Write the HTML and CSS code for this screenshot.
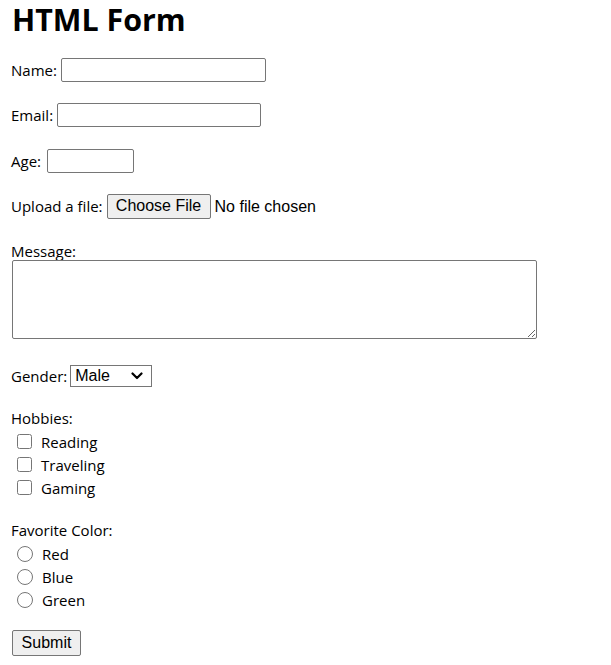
FILE: index.html
```html
<!DOCTYPE html>
<html lang="en">
<head>
<meta charset="utf-8">
<title>HTML Form</title>
<link rel="stylesheet" href="styles.css">
</head>
<body>
<h1 class="title">HTML Form</h1>
<form class="form">
  <div class="row gap-name"><label for="name">Name:</label><input class="text w-name" id="name" type="text"></div>
  <div class="row gap-email"><label for="email">Email:</label><input class="text w-email" id="email" type="email"></div>
  <div class="row gap-age"><label for="age">Age:</label><input class="text w-age" id="age" type="number"></div>
  <div class="row gap-upload"><label for="file">Upload a file:</label><input class="file" id="file" type="file"></div>
  <label class="caption gap-message" for="msg">Message:</label>
  <textarea class="msg" id="msg"></textarea>
  <div class="row gap-gender"><label for="gender">Gender:</label>
    <span class="select-wrap">
      <select class="select" id="gender"><option>Male</option><option>Female</option><option>Other</option></select>
      <svg class="chevron" width="12" height="8" viewBox="0 0 12 8" aria-hidden="true"><path d="M1.5 1.5 L6 6 L10.5 1.5" fill="none" stroke="#000" stroke-width="2.2" stroke-linecap="round" stroke-linejoin="round"/></svg>
    </span></div>
  <div class="caption gap-hobbies">Hobbies:</div>
  <div class="list">
    <label class="choice"><input class="check" type="checkbox"> Reading</label>
    <label class="choice"><input class="check" type="checkbox"> Traveling</label>
    <label class="choice"><input class="check" type="checkbox"> Gaming</label>
  </div>
  <div class="caption gap-color">Favorite Color:</div>
  <div class="list">
    <label class="choice"><input class="radio" type="radio" name="color"> Red</label>
    <label class="choice"><input class="radio" type="radio" name="color"> Blue</label>
    <label class="choice"><input class="radio" type="radio" name="color"> Green</label>
  </div>
  <div class="gap-submit"><button class="submit" type="submit">Submit</button></div>
</form>
</body>
</html>
```
FILE: styles.css
```css
html, body {
  margin: 0;
  padding: 0;
  background: #ffffff;
}
body {
  padding-left: 11px;
  font-family: "Open Sans", "Noto Sans", sans-serif;
  font-size: 15px;
  color: #000000;
}
.title {
  margin: 1px 0 0 0;
  line-height: 37px;
  font-size: 30.4px;
  font-weight: 700;
  padding-left: 1px;
}
.form {
  display: flex;
  flex-direction: column;
  align-items: flex-start;
}
.row {
  display: flex;
  align-items: center;
  gap: 4px;
  height: 24px;
}
.gap-name { margin-top: 20px; }
.gap-email { margin-top: 21px; }
.gap-age { margin-top: 22px; gap: 6px; }
.gap-upload { margin-top: 21px; }
.gap-message { margin-top: 24px; }
.gap-gender { margin-top: 25px; height: 23px; gap: 3px; }
.gap-hobbies { margin-top: 22px; }
.gap-color { margin-top: 22px; }
.gap-submit { margin-top: 19px; }
.caption {
  display: block;
  height: 18px;
  line-height: 18px;
}
.text {
  box-sizing: border-box;
  height: 24px;
  margin: 0;
  border: 1px solid #767676;
  border-radius: 2px;
  padding: 1px 2px;
  font-family: "Liberation Sans", Arial, sans-serif;
  font-size: 16px;
  background: #ffffff;
}
.w-name { width: 205px; }
.w-email { width: 204px; }
.w-age { width: 87px; }
.file {
  font-family: "Liberation Sans", Arial, sans-serif;
  font-size: 16px;
  margin: 0;
  height: 25px;
}
.file::file-selector-button {
  box-sizing: border-box;
  height: 25px;
  width: 104px;
  margin-right: 4px;
  padding: 0 6px;
  border: 1px solid #767676;
  border-radius: 2px;
  background: #efefef;
  font-family: "Liberation Sans", Arial, sans-serif;
  font-size: 16px;
  color: #000000;
}
.msg {
  box-sizing: border-box;
  display: block;
  width: 525px;
  height: 79px;
  margin: 0 0 0 1px;
  border: 1px solid #767676;
  border-radius: 2px;
  padding: 2px;
  font-family: "Liberation Mono", monospace;
  font-size: 16px;
}
.select-wrap {
  position: relative;
  display: block;
  width: 82px;
  height: 22px;
}
.select {
  box-sizing: border-box;
  display: block;
  appearance: none;
  -webkit-appearance: none;
  width: 82px;
  height: 22px;
  margin: 0;
  border: 1px solid #767676;
  border-radius: 0;
  padding: 0 0 0 4px;
  background: #ffffff;
  font-family: "Liberation Sans", Arial, sans-serif;
  font-size: 16px;
  line-height: 20px;
  color: #000000;
}
.chevron {
  position: absolute;
  right: 9px;
  top: 7px;
  pointer-events: none;
}
.list {
  display: flex;
  flex-direction: column;
  margin-top: 3px;
}
.choice {
  display: flex;
  align-items: center;
  height: 23px;
  gap: 9px;
}
.check {
  width: 15px;
  height: 15px;
  margin: 0 0 0 6px;
}
.radio {
  width: 16px;
  height: 16px;
  margin: 0 0 0 6px;
}
.submit {
  box-sizing: border-box;
  width: 69px;
  height: 26px;
  margin: 0 0 0 1px;
  padding: 0 6px;
  border: 1px solid #767676;
  border-radius: 2px;
  background: #efefef;
  font-family: "Liberation Sans", Arial, sans-serif;
  font-size: 16px;
  color: #000000;
}
```
